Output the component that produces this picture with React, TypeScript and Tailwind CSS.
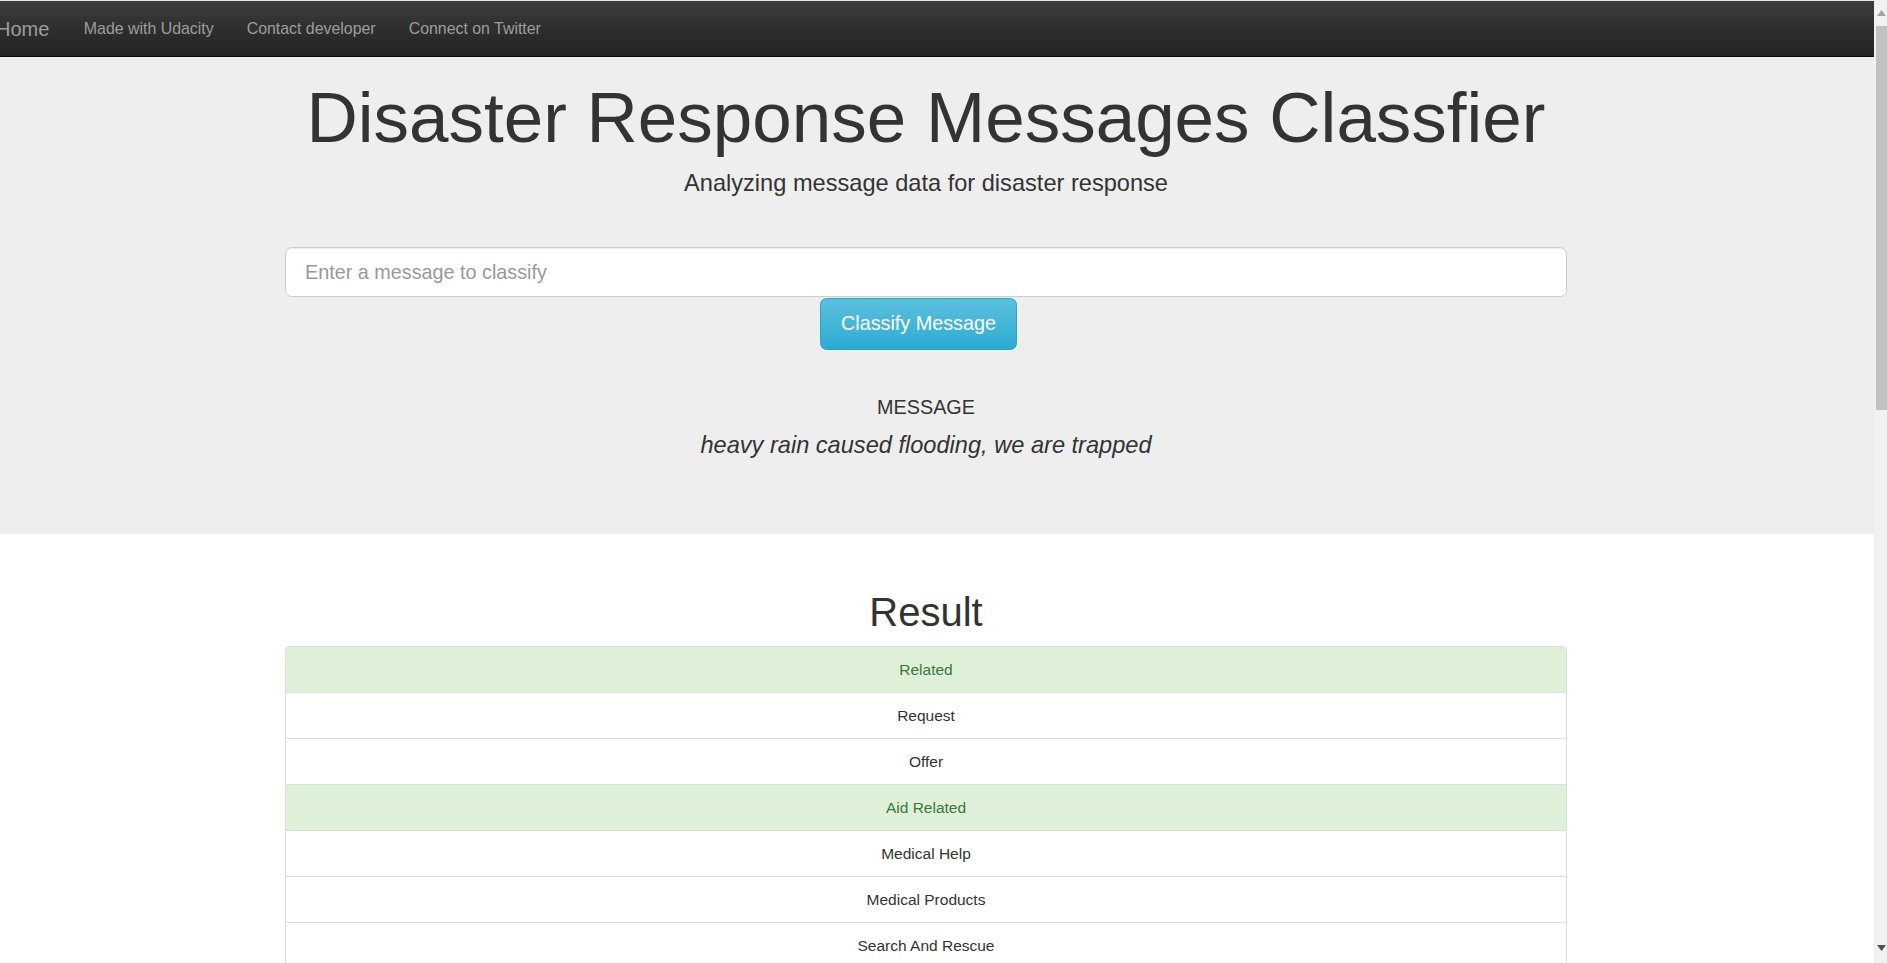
import React from 'react'

const categories: { name: string; hit: boolean }[] = [
  { name: 'Related', hit: true },
  { name: 'Request', hit: false },
  { name: 'Offer', hit: false },
  { name: 'Aid Related', hit: true },
  { name: 'Medical Help', hit: false },
  { name: 'Medical Products', hit: false },
  { name: 'Search And Rescue', hit: false },
  { name: 'Security', hit: false },
  { name: 'Military', hit: false },
  { name: 'Child Alone', hit: false },
]

const navLinks = ['Made with Udacity', 'Contact developer', 'Connect on Twitter']

const App: React.FC = () => {
  return (
    <div className="flex h-[963px] w-[1887px] overflow-hidden bg-white font-['Liberation_Sans',Arial,sans-serif] text-[#333]">
      <div className="flex min-w-0 flex-1 flex-col overflow-hidden">
        <div className="h-px shrink-0 bg-[#e6e6e6]" />

        {/* Navbar */}
        <nav className="flex h-[56px] shrink-0 items-center border-b border-[#080808] bg-gradient-to-b from-[#3c3c3c] to-[#222]">
          <a className="-ml-[4px] pr-[18px] text-[20px] leading-[22px] text-[#9d9d9d]">Home</a>
          {navLinks.map((l) => (
            <a key={l} className="px-[16.5px] text-[15.9px] leading-[22px] text-[#9d9d9d]">
              {l}
            </a>
          ))}
        </nav>

        {/* Jumbotron */}
        <section className="h-[477px] shrink-0 bg-[#eee]">
          <div className="ml-[285px] flex w-[1282px] flex-col">
            <h1 className="pt-[22px] text-center text-[71px] leading-[77px]">
              Disaster Response Messages Classfier
            </h1>
            <p className="mt-[11px] text-center text-[23.6px] leading-[33px]">
              Analyzing message data for disaster response
            </p>
            <input
              className="mt-[47px] h-[50px] w-full rounded-[6.6px] border border-[#ccc] bg-white px-[19px] text-[19.8px] shadow-[inset_0_1px_1px_rgba(0,0,0,0.075)] outline-none placeholder:text-[#999]"
              placeholder="Enter a message to classify"
            />
            <button className="ml-[535px] mt-px h-[52px] w-[197px] rounded-[6.6px] border border-[#28a4c9] bg-gradient-to-b from-[#5bc0de] to-[#2aabd2] text-[19.8px] text-white">
              Classify Message
            </button>
            <h4 className="mt-[45px] text-center text-[19.8px] leading-[24px]">MESSAGE</h4>
            <p className="mt-[11px] text-center text-[23.6px] italic leading-[30px]">
              heavy rain caused flooding, we are trapped
            </p>
          </div>
        </section>

        {/* Result */}
        <section className="ml-[285px] w-[1282px] shrink-0 pt-[56px]">
          <h1 className="text-center text-[40px] leading-[44px]">Result</h1>
          <ul className="mt-[12px] rounded-t-[4.4px] border-x border-t border-[#ddd]">
            {categories.map((c) => (
              <li
                key={c.name}
                className={`flex h-[46px] items-center justify-center border-b border-[#ddd] text-[15.5px] first:rounded-t-[4px] ${
                  c.hit ? 'bg-[#dff0d8] text-[#3c763d]' : 'bg-white text-[#333]'
                }`}
              >
                {c.name}
              </li>
            ))}
          </ul>
        </section>
      </div>

      {/* Scrollbar */}
      <div className="flex w-[13px] shrink-0 flex-col bg-[#f1f1f1]">
        <div className="flex h-[26px] shrink-0 items-center justify-end pr-[1px]">
          <svg width="9" height="6" viewBox="0 0 9 6">
            <path d="M4.5 0 L9 6 L0 6 Z" fill="#a3a3a3" />
          </svg>
        </div>
        <div className="ml-[2px] h-[384px] shrink-0 bg-[#c1c1c1]" />
        <div className="flex-1" />
        <div className="flex h-[18px] shrink-0 items-start justify-end pr-[1px]">
          <svg width="9" height="6" viewBox="0 0 9 6">
            <path d="M0 0 L9 0 L4.5 6 Z" fill="#505050" />
          </svg>
        </div>
      </div>
    </div>
  )
}

export default App
